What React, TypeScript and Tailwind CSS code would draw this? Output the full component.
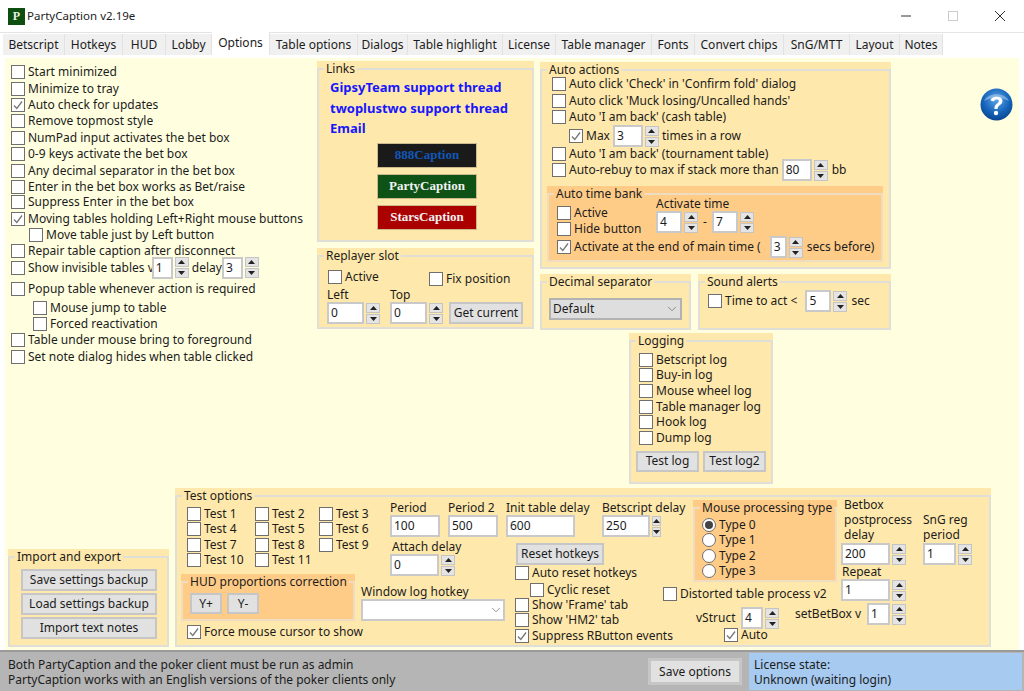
import { ChevronDown } from "lucide-react";
import type { ReactNode } from "react";

const tabs = [
  { label: "Betscript", w: "w-[62px]" },
  { label: "Hotkeys", w: "w-[58px]" },
  { label: "HUD", w: "w-[43px]" },
  { label: "Lobby", w: "w-[46px]" },
  { label: "Options", w: "w-[58px]", active: true },
  { label: "Table options", w: "w-[88px]" },
  { label: "Dialogs", w: "w-[50px]" },
  { label: "Table highlight", w: "w-[95px]" },
  { label: "License", w: "w-[53px]" },
  { label: "Table manager", w: "w-[96px]" },
  { label: "Fonts", w: "w-[43px]" },
  { label: "Convert chips", w: "w-[89px]" },
  { label: "SnG/MTT", w: "w-[66px]" },
  { label: "Layout", w: "w-[50px]" },
  { label: "Notes", w: "w-[43px]" },
];

const Check = ({ label, checked, className = "" }: { label: string; checked?: boolean; className?: string }) => (
  <div className={`flex h-[16px] items-center gap-[3px] whitespace-nowrap ${className}`}>
    <span className="flex h-[14px] w-[14px] shrink-0 items-center justify-center border border-[#6f6f6f] bg-white">
      {checked && (
        <svg width="12" height="12" viewBox="0 0 12 12" fill="none">
          <path d="M2 6.5 L4.8 9.5 L10 2.5" stroke="#777777" strokeWidth="1.3" />
        </svg>
      )}
    </span>
    <span>{label}</span>
  </div>
);

const Radio = ({ label, checked }: { label: string; checked?: boolean }) => (
  <div className="flex h-[15.5px] items-center gap-[3px] whitespace-nowrap">
    <span className="flex h-[14px] w-[14px] items-center justify-center rounded-full border border-[#6f6f6f] bg-white">
      {checked && <span className="h-[8px] w-[8px] rounded-full bg-[#444444]" />}
    </span>
    <span>{label}</span>
  </div>
);

const Box = ({ value, className = "" }: { value?: string; className?: string }) => (
  <div className={`flex h-[22px] shrink-0 items-center border-2 border-[#c9c9c9] bg-white pl-[2px] ${className}`}>{value}</div>
);

const Arrow = ({ up }: { up?: boolean }) => (
  <svg width="7" height="4" viewBox="0 0 7 4">
    <path d={up ? "M0 4 L3.5 0 L7 4 Z" : "M0 0 L3.5 4 L7 0 Z"} fill="#222222" />
  </svg>
);

const Spin = ({ value, className = "" }: { value: string; className?: string }) => (
  <div className="flex shrink-0 items-center gap-[2px]">
    <Box value={value} className={className} />
    <div className="flex h-[21px] w-[14px] flex-col gap-px">
      <span className="flex flex-1 items-center justify-center border border-[#c4c4c4] bg-[#e4e4e4]">
        <Arrow up />
      </span>
      <span className="flex flex-1 items-center justify-center border border-[#c4c4c4] bg-[#e4e4e4]">
        <Arrow />
      </span>
    </div>
  </div>
);

const Btn = ({ label, className = "" }: { label: string; className?: string }) => (
  <div className={`flex items-center justify-center whitespace-nowrap border-2 border-[#c6c6c6] bg-[#e1e1e1] ${className}`}>{label}</div>
);

const Group = ({
  legend,
  dark,
  className = "",
  inner = "",
  children,
}: {
  legend: string;
  dark?: boolean;
  className?: string;
  inner?: string;
  children: ReactNode;
}) => (
  <div className={`pt-[7px] ${dark ? "bg-[#ffcc88]" : "bg-[#ffe8ab]"} ${className}`}>
    <div className={`relative h-full border-2 border-[#dfdfd8] ${inner}`}>
      <span
        className={`absolute left-[5px] top-[-8px] px-[2px] leading-[13px] whitespace-nowrap ${dark ? "bg-[#ffcc88]" : "bg-[#ffe8ab]"}`}
      >
        {legend}
      </span>
      {children}
    </div>
  </div>
);

const CaptionLink = ({ label, className }: { label: string; className: string }) => (
  <div
    className={`flex h-[25px] w-[100px] items-center justify-center border border-[#c9b98c] font-['Liberation_Serif',serif] text-[13px] font-bold ${className}`}
  >
    {label}
  </div>
);

const HelpIcon = () => (
  <svg width="33" height="33" viewBox="0 0 33 33">
    <defs>
      <radialGradient id="helpBlue" cx="0.5" cy="0.35" r="0.7">
        <stop offset="0" stopColor="#5aa5ea" />
        <stop offset="0.6" stopColor="#1463b8" />
        <stop offset="1" stopColor="#0a3f8a" />
      </radialGradient>
    </defs>
    <circle cx="16.5" cy="16.5" r="16" fill="url(#helpBlue)" />
    <path d="M4 13 C8 4 25 4 29 13 C22 9 11 9 4 13 Z" fill="#ffffff" opacity="0.35" />
    <path
      d="M10.5 12.5 C11 7.5 22.5 7 22.5 13 C22.5 17 17.5 17 17.5 21 L14.5 21 C14 15.5 19 15.5 18.8 13 C18.5 11 14.5 11 14 13.5 Z"
      fill="#ffffff"
    />
    <circle cx="16" cy="25" r="2.2" fill="#ffffff" />
  </svg>
);

const Options = () => (
  <div className="flex h-[430px] items-start">
    {/* general switches */}
    <div className="flex w-[312px] shrink-0 flex-col pl-[6px] pt-[6px] [&>div]:h-[16.4px]">
      <Check label="Start minimized" />
      <Check label="Minimize to tray" />
      <Check label="Auto check for updates" checked />
      <Check label="Remove topmost style" />
      <Check label="NumPad input activates the bet box" />
      <Check label="0-9 keys activate the bet box" />
      <Check label="Any decimal separator in the bet box" />
      <Check label="Enter in the bet box works as Bet/raise" />
      <Check label="Suppress Enter in the bet box" className="-mt-[1px]" />
      <Check label="Moving tables holding Left+Right mouse buttons" checked />
      <Check label="Move table just by Left button" className="ml-[18px]" />
      <Check label="Repair table caption after disconnect" />
      <div className="flex items-center">
        <Check label="Show invisible tables v" />
        <span className="-ml-[2px]">
          <Spin value="1" className="w-[21px]" />
        </span>
        <span className="ml-[3px]">delay</span>
        <Spin value="3" className="w-[21px]" />
      </div>
      <Check label="Popup table whenever action is required" className="mt-[5px]" />
      <Check label="Mouse jump to table" className="ml-[22px] mt-[2px]" />
      <Check label="Forced reactivation" className="ml-[22px]" />
      <Check label="Table under mouse bring to foreground" />
      <Check label="Set note dialog hides when table clicked" className="mt-[0.5px]" />
    </div>

    {/* links and replayer */}
    <div className="mt-[3px] flex w-[217px] shrink-0 flex-col gap-[6px]">
      <Group legend="Links" className="h-[181px]">
        <div className="flex flex-col pl-[11px] pt-[7px] font-['Noto_Sans',sans-serif] text-[13px] font-bold leading-[20.5px] text-[#1616ff]">
          <span>GipsyTeam support thread</span>
          <span>twoplustwo support thread</span>
          <span>Email</span>
        </div>
        <div className="ml-[3px] mt-[4px] flex flex-col items-center gap-[6px]">
          <CaptionLink label="888Caption" className="bg-[#1a1a1a] text-[#1257b8]" />
          <CaptionLink label="PartyCaption" className="bg-[#0e5216] text-[#f2f2f2]" />
          <CaptionLink label="StarsCaption" className="bg-[#ab0000] text-[#f2f2f2]" />
        </div>
      </Group>
      <Group legend="Replayer slot" className="h-[81px]">
        <div className="flex pl-[9px] pt-[12px]">
          <Check label="Active" className="w-[101px]" />
          <Check label="Fix position" className="mt-[2px]" />
        </div>
        <div className="mt-px flex pl-[8px]">
          <div className="w-[63px]">
            <div className="h-[14px] leading-[14px]">Left</div>
            <Spin value="0" className="w-[37px]" />
          </div>
          <div className="w-[59px]">
            <div className="h-[14px] leading-[14px]">Top</div>
            <Spin value="0" className="w-[37px]" />
          </div>
          <Btn label="Get current" className="mt-[14px] h-[22px] w-[74px]" />
        </div>
      </Group>
    </div>

    {/* auto actions, separator, sound, logging */}
    <div className="ml-[6px] mt-[4px] flex w-[351px] shrink-0 flex-col">
      <Group legend="Auto actions" className="h-[207px]" inner="pl-[10px]">
        <div className="flex flex-col pt-[5px] [&>div]:h-[16.4px]">
          <Check label="Auto click 'Check' in 'Confirm fold' dialog" />
          <Check label="Auto click 'Muck losing/Uncalled hands'" />
          <Check label="Auto 'I am back' (cash table)" />
          <div className="mt-[3px] flex items-center pl-[17px]">
            <Check label="Max" checked />
            <span className="ml-[3px]">
              <Spin value="3" className="w-[30px]" />
            </span>
            <span className="ml-[3px]">times in a row</span>
          </div>
          <Check label="Auto 'I am back' (tournament table)" className="mt-[1px]" />
          <div className="flex items-center">
            <Check label="Auto-rebuy to max if stack more than" />
            <span className="ml-[3px]">
              <Spin value="80" className="w-[30px]" />
            </span>
            <span className="ml-[4px]">bb</span>
          </div>
        </div>
        <Group legend="Auto time bank" dark className="-ml-[5px] mt-[8px] h-[76px] w-[336px]" inner="border-[#f0dcc0] pl-[8px]">
          <div className="flex">
            <div className="flex w-[99px] flex-col pt-[9px] [&>div]:h-[16.4px]">
              <Check label="Active" />
              <Check label="Hide button" />
            </div>
            <div className="pt-[1px]">
              <div className="h-[15px] leading-[15px]">Activate time</div>
              <div className="flex items-center">
                <Spin value="4" className="w-[26px]" />
                <span className="ml-[5px] w-[9px]">-</span>
                <Spin value="7" className="w-[26px]" />
              </div>
            </div>
          </div>
          <div className="-mt-[1px] flex items-center">
            <Check label="Activate at the end of main time (" checked />
            <span className="ml-[9px]">
              <Spin value="3" className="w-[17px]" />
            </span>
            <span className="ml-[4px] whitespace-nowrap">secs before)</span>
          </div>
        </Group>
      </Group>
      <div className="mt-[5px] flex gap-[7px]">
        <Group legend="Decimal separator" className="h-[56px] w-[151px]" inner="px-[7px] pt-[15px]">
          <div className="flex h-[22px] items-center justify-between border-2 border-[#b2b2b2] bg-[#dedede] pl-[2px] pr-[1px]">
            Default
            <ChevronDown size={14} strokeWidth={1.2} color="#666666" />
          </div>
        </Group>
        <Group legend="Sound alerts" className="h-[56px] w-[193px]" inner="pl-[8px] pt-[7px]">
          <div className="flex items-center">
            <Check label="Time to act <" />
            <span className="ml-[8px]">
              <Spin value="5" className="w-[26px]" />
            </span>
            <span className="ml-[4px]">sec</span>
          </div>
        </Group>
      </div>
      <Group legend="Logging" className="ml-[89px] mt-[3px] h-[151px] w-[144px]" inner="pl-[8px]">
        <div className="flex flex-col pt-[10px] [&>div]:h-[15.6px]">
          <Check label="Betscript log" />
          <Check label="Buy-in log" />
          <Check label="Mouse wheel log" />
          <Check label="Table manager log" />
          <Check label="Hook log" />
          <Check label="Dump log" />
        </div>
        <div className="-ml-[3px] mt-[5px] flex gap-[4px]">
          <Btn label="Test log" className="h-[21px] w-[63px]" />
          <Btn label="Test log2" className="h-[21px] w-[63px]" />
        </div>
      </Group>
    </div>

    <div className="ml-[89px] mt-[30px]">
      <HelpIcon />
    </div>
  </div>
);

const TestOptions = () => (
  <Group legend="Test options" className="h-[159px] w-[816px]">
    <div className="flex h-full items-start">
      <div className="ml-[4px] w-[180px] shrink-0">
        <div className="grid grid-cols-[68px_64px_auto] pl-[6px] pt-[9px] [&>div]:h-[15.5px]">
          <Check label="Test 1" />
          <Check label="Test 2" />
          <Check label="Test 3" />
          <Check label="Test 4" />
          <Check label="Test 5" />
          <Check label="Test 6" />
          <Check label="Test 7" />
          <Check label="Test 8" />
          <Check label="Test 9" />
          <Check label="Test 10" />
          <Check label="Test 11" />
        </div>
        <Group legend="HUD proportions correction" dark className="mt-[6px] h-[47px] w-[174px]" inner="border-[#f0dcc0] pl-[7px] pt-[10px]">
          <div className="flex gap-[5px]">
            <Btn label="Y+" className="h-[21px] w-[32px]" />
            <Btn label="Y-" className="h-[21px] w-[32px]" />
          </div>
        </Group>
        <Check label="Force mouse cursor to show" className="ml-[6px] mt-[3px]" checked />
      </div>

      <div className="w-[145px] shrink-0">
        <div className="flex gap-[8px] pl-[29px] pt-[3px]">
          <div className="w-[50px]">
            <div className="h-[15px] leading-[15px]">Period</div>
            <Box value="100" />
          </div>
          <div className="w-[50px]">
            <div className="h-[15px] leading-[15px] whitespace-nowrap">Period 2</div>
            <Box value="500" />
          </div>
        </div>
        <div className="ml-[29px] mt-[2px]">
          <div className="ml-[2px] h-[15px] leading-[15px]">Attach delay</div>
          <Spin value="0" className="w-[49px]" />
        </div>
        <div className="mt-[8px] h-[15px] leading-[15px]">Window log hotkey</div>
        <div className="flex h-[22px] w-[144px] items-center justify-end border-2 border-[#c9c9c9] bg-white">
          <ChevronDown size={14} strokeWidth={1.2} color="#666666" />
        </div>
      </div>

      <div className="w-[157px] shrink-0">
        <div className="flex gap-[27px] pt-[3px]">
          <div className="w-[69px]">
            <div className="h-[15px] leading-[15px] whitespace-nowrap">Init table delay</div>
            <Box value="600" />
          </div>
          <div className="w-[48px]">
            <div className="h-[15px] leading-[15px] whitespace-nowrap">Betscript delay</div>
            <Spin value="250" className="w-[48px]" />
          </div>
        </div>
        <div className="mt-[6px] flex flex-col pl-[9px]">
          <Btn label="Reset hotkeys" className="ml-px h-[22px] w-[88px]" />
          <Check label="Auto reset hotkeys" />
          <Check label="Cyclic reset" className="ml-[15px] mt-[1px]" />
          <Check label="Show 'Frame' tab" className="-mt-[1px]" />
          <Check label="Show 'HM2' tab" className="-mt-[1px]" />
          <Check label="Suppress RButton events" checked />
        </div>
      </div>

      <div className="w-[178px] shrink-0">
        <Group legend="Mouse processing type" dark className="ml-[30px] mt-[3px] h-[82px] w-[144px]" inner="border-[#f0dcc0] pl-[7px] pt-[8px]">
          <Radio label="Type 0" checked />
          <Radio label="Type 1" />
          <Radio label="Type 2" />
          <Radio label="Type 3" />
        </Group>
        <Check label="Distorted table process v2" className="mt-[4px]" />
        <div className="ml-[33px] mt-[5px] flex items-center gap-[1px]">
          <span className="w-[44px]">vStruct</span>
          <Spin value="4" className="w-[22px]" />
        </div>
        <Check label="Auto" className="ml-[61px] -mt-[2px]" checked />
      </div>

      <div className="w-[82px] shrink-0">
        <div className="pl-[3px] leading-[15px]">
          Betbox
          <br />
          postprocess
          <br />
          delay
        </div>
        <div className="mt-[1px]">
          <Spin value="200" className="w-[49px]" />
        </div>
        <div className="ml-px h-[14px] leading-[14px]">Repeat</div>
        <Spin value="1" className="w-[49px]" />
        <div className="-ml-[46px] mt-[2px] flex items-center gap-[5px] whitespace-nowrap">
          <span className="w-[67px]">setBetBox v</span>
          <Spin value="1" className="w-[23px]" />
        </div>
      </div>

      <div className="pt-[15px]">
        <div className="leading-[15px] whitespace-nowrap">
          SnG reg
          <br />
          period
        </div>
        <div className="mt-[1px]">
          <Spin value="1" className="w-[33px]" />
        </div>
      </div>
    </div>
  </Group>
);

export default function App() {
  return (
    <div className="flex h-[691px] w-[1024px] flex-col overflow-hidden bg-white font-['Noto_Sans',sans-serif] text-[12px] leading-[16px] text-[#1c1c1c]">
      <header className="flex h-[32px] shrink-0 items-center pl-[8px]">
        <span className="flex h-[17px] w-[17px] items-center justify-center bg-[#0c4f10] font-['Liberation_Serif',serif] text-[12px] font-bold text-[#e8f0e0]">
          P
        </span>
        <span className="ml-[2px] text-[11.5px]">PartyCaption v2.19e</span>
        <div className="ml-auto flex items-center gap-[37px] pr-[19px]">
          <svg width="10" height="10" viewBox="0 0 10 10">
            <path d="M0 5 H10" stroke="#333333" />
          </svg>
          <svg width="10" height="10" viewBox="0 0 10 10">
            <rect x="0.5" y="0.5" width="9" height="9" fill="none" stroke="#cccccc" />
          </svg>
          <svg width="10" height="10" viewBox="0 0 10 10">
            <path d="M0 0 L10 10 M10 0 L0 10" stroke="#333333" />
          </svg>
        </div>
      </header>

      <nav className="flex h-[23px] shrink-0 items-end border-t border-[#e4e4e4] pl-[3px]">
        {tabs.map((t) => (
          <div
            key={t.label}
            className={`flex items-center justify-center whitespace-nowrap border-r border-[#e2e2e2] ${
              t.active ? "h-[23px] bg-white pb-[2px]" : "h-[21px] bg-[#f0f0f0]"
            } ${t.w}`}
          >
            {t.label}
          </div>
        ))}
      </nav>

      <main className="mx-[2px] flex-1 border-x-[3px] border-t-[3px] border-white bg-[#ffffe0]">
        <Options />
        <div className="flex items-end pl-[3px]">
          <Group legend="Import and export" className="h-[98px] w-[161px]">
            <div className="flex flex-col gap-[2px] pl-[11px] pt-[11px]">
              <Btn label="Save settings backup" className="h-[22px] w-[136px]" />
              <Btn label="Load settings backup" className="h-[22px] w-[136px]" />
              <Btn label="Import text notes" className="h-[22px] w-[136px]" />
            </div>
          </Group>
          <div className="ml-[6px]">
            <TestOptions />
          </div>
        </div>
      </main>

      <footer className="flex h-[41px] shrink-0 items-stretch border-t-2 border-[#9a9a9a] bg-[#b5b5b5] pl-[2px]">
        <div className="flex flex-1 items-center justify-between pl-[6px] pr-[8px]">
          <div className="leading-[15px]">
            Both PartyCaption and the poker client must be run as admin
            <br />
            PartyCaption works with an English versions of the poker clients only
          </div>
          <Btn label="Save options" className="h-[25px] w-[92px] outline-1 outline-[#c6c6c6]" />
        </div>
        <div className="my-[1px] mr-[2px] flex w-[273px] items-center bg-[#a6caf0] pl-[5px] leading-[15px]">
          <div>
            License state:
            <br />
            Unknown (waiting login)
          </div>
        </div>
      </footer>
    </div>
  );
}
